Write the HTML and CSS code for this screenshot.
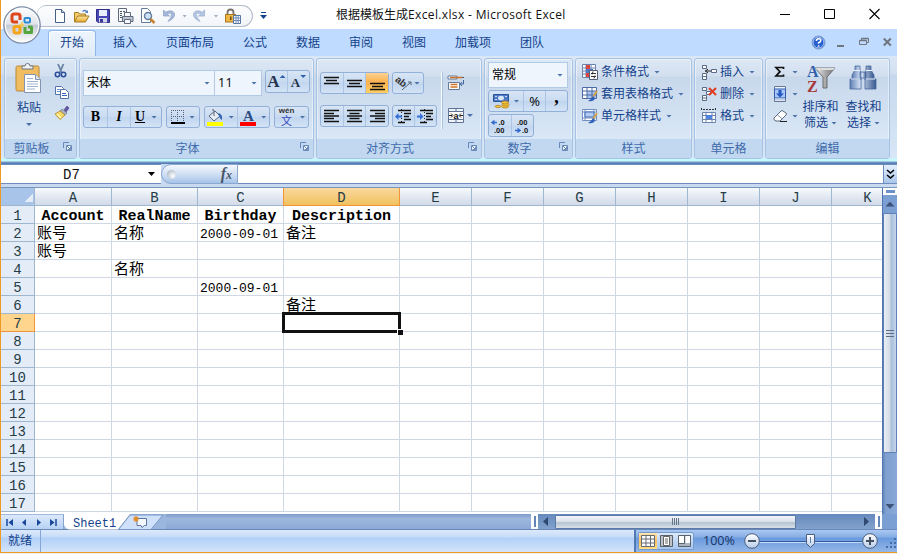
FILE: index.html
```html
<!DOCTYPE html>
<html lang="zh-CN">
<head>
<meta charset="utf-8">
<title>根据模板生成Excel.xlsx - Microsoft Excel</title>
<link rel="stylesheet" href="styles.css">
</head>
<body>
<svg class="defs" width="0" height="0">
  <defs>
    <linearGradient id="orb" x2="0" y2="1"><stop stop-color="#fff"/><stop offset=".48" stop-color="#dfe3e9"/><stop offset=".5" stop-color="#c3cad4"/><stop offset="1" stop-color="#fff"/></linearGradient>
    <linearGradient id="folder" x2="0" y2="1"><stop stop-color="#ffe9a0"/><stop offset="1" stop-color="#e7a62c"/></linearGradient>
    <linearGradient id="steel" x2="1"><stop stop-color="#5f7fb5"/><stop offset=".4" stop-color="#d5e2f5"/><stop offset="1" stop-color="#38598f"/></linearGradient>
    <linearGradient id="metal" x2="1"><stop stop-color="#f5f5f5"/><stop offset=".5" stop-color="#aaa"/><stop offset="1" stop-color="#777"/></linearGradient>
    <linearGradient id="knob" x2="0" y2="1"><stop stop-color="#fff"/><stop offset="1" stop-color="#b7cdec"/></linearGradient>
  </defs>
</svg>
<div class="window">
  <header class="titlebar">
    <svg class="orb" width="40" height="40" viewBox="0 0 40 40">
      <circle cx="20" cy="20" r="18.2" fill="url(#orb)" stroke="#7d8da6" stroke-width="1.3"/>
      <circle cx="20" cy="20" r="16.7" fill="none" stroke="#fff" stroke-width="1"/>
      <g fill="none" stroke-linejoin="round">
        <path d="M18 15v-4q0-2-2-2h-4q-2 0-2 2v4q0 2 2 2h4" stroke="#dc471b" stroke-width="3"/>
        <rect x="22.5" y="13" width="5.500" height="4.500" rx="1" stroke="#2b8bd0" stroke-width="2"/>
        <rect x="12" y="21.500" width="6" height="6.500" rx="1.500" stroke="#f4a51c" stroke-width="3"/>
        <path d="M23 22v5.500h6.500V22H26" stroke="#55a63c" stroke-width="3"/>
      </g>
      <path d="M17 20h5M20 17v5" stroke="#f9c84a" stroke-width="1.500"/>
    </svg>
    <div class="quick">
      <svg width="16" height="16"><path d="M3.500 1.500h6l3 3v10h-9z" fill="#fff" stroke="#456088"/><path d="M9.500 1.500v3h3" fill="#cbd9ee" stroke="#456088"/></svg>
      <svg width="17" height="16"><path d="M1.500 13.500v-9h4l1 1.500h6v2.500" fill="#f4cf69" stroke="#a77b24"/><path d="M1.500 14l3-6h11.500l-3.500 6z" fill="url(#folder)" stroke="#a77b24"/><path d="M9 3q3-2.500 5 0l1-1v3h-3l1-1q-1.500-1.500-3 0" fill="#5a82bd"/></svg>
      <svg width="16" height="16"><path d="M1.500 1.500h13v13H3l-1.500-1.500z" fill="#4647b5" stroke="#2c2d87"/><path d="M4 2h8v6H4z" fill="#e9f0fb"/><path d="M4 10h8v4.500H4z" fill="#d4d8e9"/><path d="M5 11h3v3.500H5z" fill="#383994"/></svg>
      <svg width="17" height="16" fill="#f7f9fc" stroke="#5e6b7e"><path d="M1.500.5h8v13h-8z"/><path d="M3 3.500h2m1 0h2M3 5.500h2M3 7.500h2M3 9.500h2" stroke="#456"/><path d="M7.500 4.500h6v4h-6z"/><path d="M5.500 8.500h10.500v5H5.500z" fill="#bdc4cd"/><path d="M7.500 11.500h6v4h-6z"/></svg>
      <svg width="17" height="16"><path d="M2.500.5h6l3 3v11h-9z" fill="#fff" stroke="#64799a"/><circle cx="9" cy="8" r="3.500" fill="#cfe3f8" stroke="#667f9e" stroke-width="1.500"/><path d="M11.500 11l4 4" stroke="#c9832d" stroke-width="2.500"/></svg>
      <svg width="16" height="16"><path d="M2.500 2v6h6L6.300 5.900Q10 4 10.500 6.500q0 3-3.500 7 7.500-3.500 6.500-8Q11.500 1 4.700 4.200z" fill="#a3b7d8" stroke="#8fa5ca" stroke-width=".8"/></svg>
      <i class="caret faint"></i>
      <svg width="16" height="16" class="redo"><path d="M12.500 2v6h-6l2.200-2.100Q5 4 4.500 6.500q0 3 3.500 7Q.5 10 1.500 5.500 3.500 1 10.300 4.200z" fill="#b4c6e0" stroke="#9db2d3" stroke-width=".8"/></svg>
      <i class="caret faint"></i>
      <svg width="17" height="16" class="lock"><path d="M3.500 7V4.500q0-3 3-3t3 3V7" fill="none" stroke="#76716a" stroke-width="1.800"/><rect x="1.500" y="6.500" width="10" height="7.500" fill="#edb645" stroke="#a97820"/><path d="M6 8.500h1.500V12H6z" fill="#6b4a13"/><path d="M9.500 7.500h7v8h-7z" fill="#fff" stroke="#54749f"/><path d="M9.500 10h7m-7 2.500h7M12 7.500v8m2.200-8v8" stroke="#6c8bb5"/></svg>
    </div>
    <div class="more"><i></i><i class="caret navy"></i></div>
    <div class="title">根据模板生成<span>Excel.xlsx - Microsoft Excel</span></div>
    <div class="winctl">
      <svg width="11" height="12"><path d="M1 6.500h10" stroke="#000"/></svg>
      <svg width="11" height="12"><path d="M.5 1.500h10v9H.5z" fill="none" stroke="#000"/></svg>
      <svg width="11" height="12"><path d="M.5 1l10 10m0-10l-10 10" stroke="#000" stroke-width="1.100"/></svg>
    </div>
  </header>

  <nav class="tabs">
    <span class="tab active">开始</span><span class="tab t2">插入</span><span class="tab t3">页面布局</span><span class="tab t4">公式</span><span class="tab t5">数据</span><span class="tab t6">审阅</span><span class="tab t7">视图</span><span class="tab t8">加载项</span><span class="tab t9">团队</span>
    <div class="docctl">
      <svg width="15" height="15"><circle cx="7.500" cy="7.500" r="6.500" fill="#2860cf" stroke="#7e9fc9"/><circle cx="7.500" cy="7.500" r="5.400" fill="none" stroke="#cfe2ff" stroke-width=".8"/><path d="M5.400 6q0-2.300 2.200-2.300T9.800 5.600q0 1.300-2.200 2.200v1m0 1.400v1.500" fill="none" stroke="#fff" stroke-width="1.500"/></svg>
      <svg width="8" height="12"><path d="M0 9h7" stroke="#6f7680" stroke-width="2"/></svg>
      <svg width="10" height="12"><path d="M2.500 4V1.500h7v4H8M.5 3.500h7v4h-7z" fill="none" stroke="#6f7680"/><path d="M.5 3.500h7M2.500 1.500h7" stroke="#6f7680" stroke-width="1.600"/></svg>
      <svg width="9" height="12"><path d="M.8 1.500l7 7m0-7l-7 7" stroke="#6f7680" stroke-width="2"/></svg>
    </div>
  </nav>

  <div class="ribbon">
    <section class="group clipboard">
      <div class="body">
        <div class="paste">
          <svg width="28" height="31"><rect x="1" y="3" width="23" height="25" rx="1.500" fill="#efbd60" stroke="#b98639"/><path d="M7 6V3h3q0-2.500 2.500-2.500T15 3h3v3z" fill="#f0f2f4" stroke="#6f7680"/><path d="M9.500 11.500h11l5 5v13h-16z" fill="#fff" stroke="#8593b1"/><path d="M20.500 11.500v5h5" fill="#dce5f2" stroke="#8593b1"/><path d="M12 15.500h6m-6 3h11m-11 2.500h11m-11 2.500h11m-11 2.500h8" stroke="#9fb3d0"/></svg>
          <span>粘贴</span><i class="caret"></i>
        </div>
        <div class="clips">
          <svg width="14" height="16"><path d="M4 1l4 9M9.500 1l-4 9" stroke="#6983a4" stroke-width="1.800"/><circle cx="3.500" cy="11.500" r="2.200" fill="none" stroke="#294f9d" stroke-width="1.600"/><circle cx="9.500" cy="11.500" r="2.200" fill="none" stroke="#294f9d" stroke-width="1.600"/></svg>
          <svg width="16" height="14" fill="#fff" stroke="#5272a8"><path d="M1.500 1.500h6l2 2v6h-8z"/><path d="M3 4.500h4m-4 2h5" stroke="#6e92d3"/><path d="M6.500 4.500h5l3 3v6h-8z"/><path d="M8 8.500h4m-4 2h5" stroke="#3a62c0"/></svg>
          <svg width="16" height="16"><path d="M10 5l3-4 2 2-3 4z" fill="#6859a8" stroke="#4b4486" stroke-width=".7"/><path d="M8 4l5 4-2 2-5-4z" fill="#aab4c4" stroke="#69748b" stroke-width=".7"/><path d="M6 6l5 4-5 4.500-5-5.500z" fill="#f7d965" stroke="#ae8423" stroke-width=".8"/><path d="M3 9l4 4" stroke="#fff5b4" stroke-width="1.500"/></svg>
        </div>
      </div>
      <footer>剪贴板<svg class="launch" width="9" height="9"><use href="#launch"/></svg></footer>
    </section>

    <section class="group font">
      <div class="body col">
        <div class="line">
          <div class="combo face"><span>宋体</span><i class="caret"></i></div><div class="combo size"><span>11</span><i class="caret"></i></div>
          <div class="btns grow"><span class="b"><b class="big">A</b><i class="caret up"></i></span><span class="b"><b class="small">A</b><i class="caret"></i></span></div>
        </div>
        <div class="line second">
          <div class="btns"><span class="b w24"><b>B</b></span><span class="b w24"><em>I</em></span><span class="b w30"><u>U</u><i class="caret"></i></span></div>
          <div class="btns w34"><span class="b"><svg width="14" height="14"><path d="M.5 0v13m6-13v13m6-13v13M0 .5h13m-13 6h13" stroke="#56627a" stroke-dasharray="1 1" fill="none"/><path d="M0 13h14" stroke="#000" stroke-width="2"/></svg><i class="caret"></i></span></div>
          <div class="btns w66"><span class="b"><svg width="17" height="17"><path d="M2 7l6-5 5 5-6 5z" fill="#e4ebf2" stroke="#56657d"/><path d="M7 7V2q0-2-2-1" fill="none" stroke="#56657d"/><path d="M11 4q5 1 4 7-2-1-3-4z" fill="#3465ae"/><path d="M0 13h16v4H0z" fill="#ff0"/></svg><i class="caret"></i></span><span class="b"><svg width="17" height="17"><text x="3" y="12" class="iconA">A</text><path d="M0 13h16v4H0z" fill="#f00"/></svg><i class="caret"></i></span></div>
          <div class="btns w35"><span class="b"><span class="wen"><small>wén</small><span>文</span></span><i class="caret"></i></span></div>
        </div>
      </div>
      <footer>字体<svg class="launch" width="9" height="9"><use href="#launch"/></svg></footer>
    </section>

    <section class="group align">
      <div class="body">
        <div class="stack">
          <div class="line">
            <div class="btns three"><span class="b"><svg width="15" height="12"><path d="M0 .5h15m-13 3h11M0 6.500h15" class="ink"/></svg></span><span class="b"><svg width="15" height="12"><path d="M0 3.500h15M2 6.500h11M0 9.500h15" class="ink"/></svg></span><span class="b on"><svg width="15" height="12"><path d="M0 6.500h15M2 9.500h11M0 12.500h15" class="ink"/></svg></span></div>
            <div class="btns w32"><span class="b"><svg width="16" height="16"><text x="-1" y="10" class="slant" transform="rotate(38 5 7)">ab</text><path d="M6 15l9-8m0 3V7h-3" stroke="#596476" fill="none"/></svg><i class="caret"></i></span></div>
          </div>
          <div class="line">
            <div class="btns three"><span class="b"><svg width="15" height="12"><path d="M0 .5h15M0 3.500h10M0 6h15M0 8.500h10M0 11.500h15" class="ink"/></svg></span><span class="b"><svg width="15" height="12"><path d="M0 .5h15m-12.500 3h10M0 6h15m-12.500 2.500h10M0 11.500h15" class="ink"/></svg></span><span class="b"><svg width="15" height="12"><path d="M0 .5h15M5 3.500h10M0 6h15M5 8.500h10M0 11.500h15" class="ink"/></svg></span></div>
            <div class="btns w45"><span class="b"><svg width="17" height="15"><path d="M3 1.500h13M9 4.500h7M9 7.500h5m-5 3h7M3 13.500h7" class="ink"/><path d="M6.500 0v15" stroke="#222" stroke-dasharray="1 2"/><path d="M7 6.500H3.500V4L0 7.500 3.500 11V8.500H7z" fill="#366fd7"/></svg></span><span class="b"><svg width="17" height="15"><path d="M3 1.500h13M9 4.500h7M9 7.500h5m-5 3h7M3 13.500h7" class="ink"/><path d="M7.500 0v15" stroke="#222" stroke-dasharray="1 2"/><path d="M0 6.500h3V4l3.500 3.500L3 11V8.500H0z" fill="#366fd7"/></svg></span></div>
          </div>
        </div>
        <div class="wrapcol">
          <svg width="17" height="16"><path d="M0 2.500h16" stroke="#4e5968"/><path d="M0 1h9v3H0zM.5 7.500h11v7H.5z" fill="#fff" stroke="#647a9b"/><path d="M2 2.500h12M2.500 9.500h7m-7 2.500h7" stroke="#d07325" stroke-width="1.500"/><path d="M15.500 5v4h-3m1.500-2l-2 2 2 2" fill="none" stroke="#41659d"/></svg>
          <div><svg width="16" height="15"><path d="M.5.500h15v14H.5zM.5 3.500h15m-15 8h15M8 .500v3m0 8v3" fill="#eef3fa" stroke="#5f7492"/><path d="M1 4h14v7H1z" fill="#fff"/><path d="M1 7.500h3m8 0h3M3 5.500l2 2-2 2m10-4l-2 2 2 2" stroke="#222" fill="none"/><text x="5.400" y="10.500" class="tiny">a</text></svg><i class="caret"></i></div>
        </div>
      </div>
      <footer>对齐方式<svg class="launch" width="9" height="9"><use href="#launch"/></svg></footer>
    </section>

    <section class="group number">
      <div class="body col">
        <div class="combo general"><span>常规</span><i class="caret"></i></div>
        <div class="btns numbtns"><span class="b w34"><svg width="17" height="16"><path d="M.5 1.500h15v7H.5z" fill="#4e78c3" stroke="#28549c"/><ellipse cx="8" cy="5" rx="3" ry="2.300" fill="#d8e6fb"/><path d="M2 3.500h2m8 0h2m-12 3h2" stroke="#c8daf5"/><g fill="#f7c63c" stroke="#a8741d" stroke-width=".7"><ellipse cx="12" cy="13.500" rx="3.500" ry="1.500"/><ellipse cx="12.500" cy="11.500" rx="3.500" ry="1.500"/><ellipse cx="12" cy="9.500" rx="3.500" ry="1.500"/><ellipse cx="5" cy="13.500" rx="3" ry="1.200"/></g></svg><i class="caret"></i></span><span class="b pct">%</span><span class="b comma">,</span></div>
        <div class="btns decbtns"><span class="b"><svg width="17" height="18"><text x="7.500" y="8" class="dec">.0</text><text x="3" y="16" class="dec">.00</text><path d="M6 5.500H1m2.500-2L1 5.500l2.500 2" stroke="#3169cd" stroke-width="1.500" fill="none"/></svg></span><span class="b"><svg width="17" height="18"><text x="3" y="8" class="dec">.00</text><text x="8" y="16" class="dec">.0</text><path d="M1 13.500h5m-2.500-2L6 13.500l-2.500 2" stroke="#3169cd" stroke-width="1.500" fill="none"/></svg></span></div>
      </div>
      <footer>数字<svg class="launch" width="9" height="9"><use href="#launch"/></svg></footer>
    </section>

    <section class="group styles">
      <div class="body col list">
        <div><svg width="16" height="16"><path d="M.5.500h13v13H.5zM.5 4h13m-13 3h13m-13 3h13M4 .500v13m5-13v13" fill="#fff" stroke="#6d83ae"/><path d="M4 1h4v4H4zM4 9h4v4H4z" fill="#db4540"/><path d="M4 5h7v4H4z" fill="#4e79c8"/><path d="M7.500 6.500h8v9h-8z" fill="#fff" stroke="#515e73"/><path d="M9 9.500h5m-5 3h5m-3-5l-1 3m3 1l-1 3" stroke="#333"/></svg>条件格式<i class="caret"></i></div>
        <div><svg width="16" height="16"><path d="M.5 1.500h14v11H.5z" fill="#fff" stroke="#4c6ba4"/><path d="M5 5h9v7H5z" fill="#a9c4ef"/><path d="M.5 5h14m-14 4h14M5 1.500v11m5-11v11" stroke="#4c6ba4"/><path d="M15 5l-4 6" stroke="#d2a54d" stroke-width="2"/><path d="M11 10l2 2q-1 4-7 3 3-1 5-5z" fill="#2e5fbd"/></svg>套用表格格式<i class="caret"></i></div>
        <div><svg width="16" height="16"><path d="M.5 1.500h14v11H.5zM.5 4h14m-14 6h14M3 1.500v11m9-11v11" fill="#fff" stroke="#7290c0"/><path d="M3 4h9v5H3z" fill="#b5ccf1" stroke="#416bb6"/><path d="M15 5l-4 6" stroke="#d2a54d" stroke-width="2"/><path d="M11 10l2 2q-1 4-7 3 3-1 5-5z" fill="#2e5fbd"/></svg>单元格样式<i class="caret"></i></div>
      </div>
      <footer>样式</footer>
    </section>

    <section class="group cells">
      <div class="body col list">
        <div><svg width="16" height="16"><path d="M1.500 1.500h4v3h-4zM1.500 9.500h4v3h-4zM1.500 12.500h4v3h-4zM10.500 5.500h5v3h-5z" fill="#fff" stroke="#586b88"/><path d="M4 7h6M7 5L4.500 7 7 9" fill="none" stroke="#222"/></svg>插入<i class="caret"></i></div>
        <div><svg width="16" height="16"><path d="M1.500 1.500h4v3h-4zM5.500 5.500h4v3h-4zM1.500 9.500h4v5h-4zM1.500 12h4" fill="#fff" stroke="#586b88"/><path d="M8 2l7 7m0-7L8 9" stroke="#e23b21" stroke-width="2"/></svg>删除<i class="caret"></i></div>
        <div><svg width="16" height="16"><path d="M1.500 4.500h13v10h-13zM1 7.500h14m-14 4h14M5 4.500v10m6-10v10" fill="#fff" stroke="#6b84ae"/><path d="M5 7h6v4H5z" fill="#4c84df"/><path d="M.5 0v3m14-3v3M2 1.500h11" stroke="#333" stroke-dasharray="2 1"/></svg>格式<i class="caret"></i></div>
      </div>
      <footer>单元格</footer>
    </section>

    <section class="group editing">
      <div class="body">
        <div class="list edits">
          <div><svg width="16" height="14" viewBox="1 0 16 14"><path d="M11.500 4V2.500H4l4 4.200-4 4.300h7.500V9.500" fill="none" stroke="#111" stroke-width="1.700"/></svg><i class="caret"></i></div>
          <div><svg width="14" height="16"><path d="M1.500.5h11v15h-11z" fill="#eef4fd" stroke="#67799b"/><path d="M1.500 3h11v9h-11z" fill="#a9c8f8" stroke="#315cab"/><path d="M5.500 4h3v3.500H11L7 11.500 3 7.500h2.500z" fill="#2458c0"/><path d="M2 13.500h10" stroke="#c4d3e8" stroke-width="2"/></svg><i class="caret"></i></div>
          <div><svg width="16" height="14"><path d="M1 9l7-7q1-1 2 0l3 2q1 1 0 2l-6 6H3q-3-1-2-3z" fill="#fff" stroke="#59677e"/><path d="M4.500 6l5 4" stroke="#8796ab"/><path d="M7 12.500h7" stroke="#222"/></svg><i class="caret"></i></div>
        </div>
        <div class="bigbtn sort"><svg width="30" height="31"><text x="1" y="14" class="sortA">A</text><text x="1" y="29" class="sortZ">Z</text><path d="M9 5h20l-8 9v11h-4V14z" fill="url(#metal)" stroke="#696d74"/><path d="M9 5h20l-2 2H11z" fill="#ddd"/></svg><span>排序和</span><span>筛选<i class="caret"></i></span></div>
        <div class="bigbtn"><svg width="30" height="31"><g fill="url(#steel)" stroke="#47679f" stroke-width=".8"><path d="M6 3h5v4l1 5v5H3v-5l3-5zM17 3h5v4l3 5v5H16v-5l1-5z"/><path d="M11 9h6v6h-6z"/><path d="M1 16h11v10H1zm15 0h11v10H16z"/></g><path d="M5 7.500h6m6 0h6M2 16h9m6 0h9" stroke="#eef4ff"/></svg><span>查找和</span><span>选择<i class="caret"></i></span></div>
      </div>
      <footer>编辑</footer>
    </section>
  </div>

  <div class="formulabar">
    <div class="namebox"><span>D7</span><i class="caret black"></i></div>
    <div class="fx"><i class="dot"></i><span>f<small>x</small></span></div>
    <div class="formula"></div>
    <div class="expand"><svg width="9" height="11"><path d="M1 1l3.500 3L8 1M1 6l3.500 3L8 6" fill="none" stroke="#000" stroke-width="1.600"/></svg></div>
  </div>

  <main class="sheet">
    <div class="gridwrap">
    <table>
      <colgroup><col class="c0"><col class="cA"><col class="cB"><col class="cB"><col class="cD"><col class="cN"><col class="cN"><col class="cN"><col class="cN"><col class="cN"><col class="cN"><col class="cN"></colgroup>
      <thead><tr><th class="corner"></th><th>A</th><th>B</th><th>C</th><th class="sel">D</th><th>E</th><th>F</th><th>G</th><th>H</th><th>I</th><th>J</th><th>K</th></tr></thead>
      <tbody>
        <tr class="head"><th>1</th><td>Account</td><td>RealName</td><td>Birthday</td><td>Description</td><td></td><td></td><td></td><td></td><td></td><td></td><td></td></tr>
        <tr><th>2</th><td>账号</td><td>名称</td><td>2000-09-01</td><td>备注</td><td></td><td></td><td></td><td></td><td></td><td></td><td></td></tr>
        <tr><th>3</th><td>账号</td><td></td><td></td><td></td><td></td><td></td><td></td><td></td><td></td><td></td><td></td></tr>
        <tr><th>4</th><td></td><td>名称</td><td></td><td></td><td></td><td></td><td></td><td></td><td></td><td></td><td></td></tr>
        <tr><th>5</th><td></td><td></td><td>2000-09-01</td><td></td><td></td><td></td><td></td><td></td><td></td><td></td><td></td></tr>
        <tr><th>6</th><td></td><td></td><td></td><td>备注</td><td></td><td></td><td></td><td></td><td></td><td></td><td></td></tr>
        <tr><th class="sel">7</th><td></td><td></td><td></td><td class="cursor"></td><td></td><td></td><td></td><td></td><td></td><td></td><td></td></tr>
        <tr><th>8</th><td></td><td></td><td></td><td></td><td></td><td></td><td></td><td></td><td></td><td></td><td></td></tr>
        <tr><th>9</th><td></td><td></td><td></td><td></td><td></td><td></td><td></td><td></td><td></td><td></td><td></td></tr>
        <tr><th>10</th><td></td><td></td><td></td><td></td><td></td><td></td><td></td><td></td><td></td><td></td><td></td></tr>
        <tr><th>11</th><td></td><td></td><td></td><td></td><td></td><td></td><td></td><td></td><td></td><td></td><td></td></tr>
        <tr><th>12</th><td></td><td></td><td></td><td></td><td></td><td></td><td></td><td></td><td></td><td></td><td></td></tr>
        <tr><th>13</th><td></td><td></td><td></td><td></td><td></td><td></td><td></td><td></td><td></td><td></td><td></td></tr>
        <tr><th>14</th><td></td><td></td><td></td><td></td><td></td><td></td><td></td><td></td><td></td><td></td><td></td></tr>
        <tr><th>15</th><td></td><td></td><td></td><td></td><td></td><td></td><td></td><td></td><td></td><td></td><td></td></tr>
        <tr><th>16</th><td></td><td></td><td></td><td></td><td></td><td></td><td></td><td></td><td></td><td></td><td></td></tr>
        <tr><th>17</th><td></td><td></td><td></td><td></td><td></td><td></td><td></td><td></td><td></td><td></td><td></td></tr>
      </tbody>
    </table>
    </div>
    <div class="vscroll">
      <div class="vsplit"></div>
      <div class="vup"><i class="arrow-up"></i></div>
      <div class="vthumb"><i></i><i></i><i></i></div>
      <div class="vdown"><i class="arrow-down"></i></div>
    </div>
  </main>

  <div class="sheettabs">
    <div class="navs">
      <svg width="8" height="9"><path d="M1 1v7" stroke="#19489b" stroke-width="1.500"/><path d="M7 1v7L2.500 4.500z" fill="#19489b"/></svg>
      <svg width="8" height="9"><path d="M6 1v7L2 4.500z" fill="#19489b"/></svg>
      <svg width="8" height="9"><path d="M2 1v7l4-3.500z" fill="#19489b"/></svg>
      <svg width="8" height="9"><path d="M1 1v7l4.500-3.500z" fill="#19489b"/><path d="M7 1v7" stroke="#19489b" stroke-width="1.500"/></svg>
    </div>
    <svg class="tabshape" width="102" height="16"><path d="M0 0h66L54 15.500H6Q2 15.500 0 11z" fill="#fff"/><path d="M66 1h33L87 15.500H54.500z" fill="#cfe1fa" stroke="#7795c5"/><text x="9" y="12.500" class="sheetname">Sheet1</text><path d="M73 4.500h9.500v7h-2L78 13.500l-1-2h-4z" fill="#f4f8ff" stroke="#60759b"/><path d="M72 2v6m-3-3h6M70 3l4 4m0-4l-4 4" stroke="#e38b21" stroke-width="1.100"/></svg>
    <div class="tabfill"></div>
    <div class="hsplit"></div>
    <div class="hscroll">
      <i class="arrow-left"></i>
      <div class="hthumb"><i></i><i></i><i></i><i></i></div>
      <i class="arrow-right"></i>
    </div>
    <div class="hsplit"></div>
    <div class="sizebox"></div>
  </div>

  <footer class="status">
    <div class="ready">就绪</div>
    <div class="fill"></div>
    <div class="right">
      <div class="views">
        <span class="v on"><svg width="14" height="12"><path d="M.5.500h13v11H.5zM.5 4h13m-13 4h13M5 .500v11m4.500-11v11" fill="#fff" stroke="#666b73"/></svg></span>
        <span class="v"><svg width="13" height="12"><path d="M.5.500h12v11H.5z" fill="#bec4ca" stroke="#59616c"/><path d="M3.500 1.500h6v9h-6zM5 4h3M5 6h3M5 8h3" fill="#fff" stroke="#666"/></svg></span>
        <span class="v"><svg width="13" height="12"><path d="M.5.500h12v11H.5z" fill="#aab4c0" stroke="#59616c"/><path d="M1 1h5v7H1zM7.500 1H12v7H7.500z" fill="#fff"/><path d="M1 8.500h5.500V1" stroke="#59616c" fill="none"/></svg></span>
      </div>
      <span class="pct100">100%</span>
      <svg class="zoom" width="136" height="20"><path d="M16 10.500h103" stroke="#315b9f"/><path d="M16 11.500h103" stroke="#c3dafa"/><path d="M67.500 8v6" stroke="#315b9f"/><g fill="url(#knob)" stroke="#4c5e7a"><circle cx="9" cy="10" r="7.300"/><circle cx="127" cy="10" r="7.300"/><path d="M63.500 3.500h8v9l-4 4-4-4z"/></g><path d="M5 10h8m110 0h8m-4-4v8" stroke="#444f60" stroke-width="2"/><path d="M67.500 6v6" stroke="#6480ad"/></svg>
      <svg class="grip" width="11" height="12"><path d="M9 1h2M5 5h2m2 0h2M1 9h2m2 0h2m2 0h2" stroke="#466da8" stroke-width="2"/></svg>
    </div>
  </footer>
</div>
<svg class="defs" width="0" height="0"><defs><g id="launch"><path d="M.5 6V.5H6" fill="none" stroke="#6689b8"/><path d="M3.500 3.500h5v5h-5z" fill="#f4f9ff" stroke="#6689b8"/><path d="M4 4l3 3M7.500 4.500v3h-3" stroke="#6689b8" fill="none"/></g></defs></svg>
</body>
</html>
```
FILE: styles.css
```css
*, *::before, *::after { box-sizing: border-box; }
body {
  margin: 0;
  width: 897px;
  height: 554px;
  overflow: hidden;
  background: #f4f1ea;
  font: 12px/16px "Open Sans", "Noto Sans CJK SC", sans-serif;
  color: #15428b;
}
svg { display: block; flex: none; overflow: visible; }
.defs { position: absolute; }
.window {
  display: flex;
  flex-direction: column;
  height: 553px;
  border-left: 1px solid #ee9a25;
  border-bottom: 1px solid #ee9a25;
  position: relative;
}

/* carets */
.caret {
  flex: none;
  display: inline-block;
  width: 6px;
  height: 3px;
  background: #4a72a8;
  clip-path: polygon(0 0, 100% 0, 50% 100%);
}
.caret.up { clip-path: polygon(50% 0, 100% 100%, 0 100%); }
.caret.faint { background: #a3b1c6; width: 5px; }
.caret.navy { background: #15428b; width: 7px; height: 4px; }
.caret.black { background: #000; width: 7px; height: 4px; }

/* title bar */
.titlebar { height: 29px; flex: none; display: flex; background: #fff; }
.orb { position: absolute; left: 1px; top: 5px; z-index: 3; }
.quick {
  width: 216px;
  height: 22px;
  margin: 5px 0 0 36px;
  padding-left: 15px;
  display: flex;
  align-items: center;
  gap: 5.200px;
  border: 1px solid #b4bccb;
  border-left: 0;
  border-radius: 10px 12px 12px 0;
  background: linear-gradient(#fdfdfe, #f1f4f9);
}
.more { margin: 12px 0 0 7px; width: 7px; height: 8px; display: flex; flex-direction: column; gap: 2px; }
.more i:first-child { height: 1px; width: 5px; margin-left: 1px; background: #15428b; }
.title { width: 240px; margin-left: 69px; line-height: 29px; color: #111; white-space: nowrap; }
.title span { letter-spacing: .36px; }
.winctl { margin: 8px 17px 0 auto; display: flex; gap: 34px; }

/* ribbon tabs */
.tabs { height: 27px; flex: none; display: flex; background: #bfdbff; line-height: 27px; white-space: nowrap; }
.tab { flex: none; width: 24px; margin-right: 29px; }
.tab.active {
  width: 48px;
  height: 26px;
  margin: 1px 17px 0 47px;
  line-height: 24px;
  text-align: center;
  border: 1px solid #8fb7e8;
  border-bottom: 0;
  border-radius: 4px 4px 0 0;
  background: linear-gradient(#eef5fd, #dfeaf7);
  box-shadow: inset 1px 1px #fff;
}
.tab.t3 { width: 48px; }
.tab.t8 { width: 36px; }
.docctl { margin: 0 5px 0 auto; display: flex; align-items: center; gap: 14px; }
.docctl svg:first-child { margin-right: -3px; }

/* ribbon */
.ribbon {
  height: 108px;
  flex: none;
  display: flex;
  gap: 2px;
  padding: 2px 0 6px 3px;
  background: linear-gradient(#dbe7f5 0, #d1dff0 18px, #c7d8ed 19px, #d8e7f7 102px, #c5fafd 103px, #c5fafd 105px, #7d9dc8 106px, #4a75b1 108px);
}
.group {
  flex: none;
  display: flex;
  flex-direction: column;
  height: 101px;
  border: 1px solid #a6c3e4;
  border-radius: 3px;
  background: linear-gradient(#dde8f5 0, #d2dfef 17px, #c8d8eb 18px, #d9e7f6 80px);
  box-shadow: inset 0 0 0 1px rgba(255,255,255,.45);
  white-space: nowrap;
}
.group .body { display: flex; height: 80px; flex: none; }
.group .body.col { flex-direction: column; }
.group footer {
  height: 19px;
  line-height: 19px;
  text-align: center;
  color: #3e6aaa;
  background: #c1d8f0;
  position: relative;
}
.launch { position: absolute; right: 4px; top: 3px; }
.clipboard { width: 73px; }
.clipboard footer { padding-right: 18px; }
.font { width: 235px; }
.font footer { padding-right: 18px; }
.align { width: 166px; }
.align footer { padding-right: 18px; }
.number { width: 89px; }
.number footer { padding-right: 18px; }
.styles { width: 117px; }
.cells { width: 69px; }
.editing { width: 125px; }

.paste { width: 48px; padding-top: 4px; display: flex; flex-direction: column; align-items: center; }
.paste span { margin: 6px 0 6px; }
.paste i { margin-top: 1px; }
.clips { display: flex; flex-direction: column; gap: 6px; padding-top: 4px; margin-left: 1px; }

.line { display: flex; }
.combo {
  display: flex;
  align-items: center;
  justify-content: space-between;
  height: 26px;
  padding: 0 4px 0 3px;
  border: 1px solid #b3cae7;
  background: #eef5fd;
  color: #000;
}
.btns {
  display: flex;
  height: 22px;
  border: 1px solid #92b0d8;
  border-radius: 3px;
  background: linear-gradient(#d7e5f5, #c9dbf0 50%, #c0d5ef 51%, #d3e3f5);
  flex: none;
}
.b { flex: 1 1 0; display: flex; align-items: center; justify-content: center; gap: 4px; color: #000; }
.b + .b { border-left: 1px solid #adc5e4; }
.b b, .b em, .b u { font-family: "Liberation Serif", serif; font-weight: bold; font-size: 14px; }
.b u { padding-right: 2px; }
.font .body { padding: 11px 0 0 3px; }
.face { width: 132px; }
.size { width: 47px; border-left: 0; font-size: 12.500px; letter-spacing: .3px; }
.grow { width: 45px; height: 23px; margin-left: 3px; }
.grow .b { gap: 0; align-items: center; }
.grow .caret { align-self: flex-start; margin-top: 4px; background: #3162aa; }
.b .big { font-size: 17px; color: #26354d; }
.b .small { font-size: 13px; color: #26354d; padding-top: 3px; }
.second { margin-top: 10px; gap: 4px; }
.w24 { flex: 0 0 23px; }
.w30 { flex: 0 0 31px; }
.w32 { width: 32px; }
.w32 .b { gap: 2px; }
.btns.w34 { width: 34px; }
.btns.w66 { width: 66px; }
.btns.w35 { width: 35px; }
.btns.w45 { width: 45px; }
.iconA { font: bold 15px "Liberation Serif", serif; fill: #2d4d83; }
.wen { display: flex; flex-direction: column; align-items: center; width: 18px; }
.wen small { font: bold 8px/8px "Liberation Sans", sans-serif; color: #333; }
.wen span { font-size: 11px; line-height: 12px; color: #3448bd; }
.ink { stroke: #111; stroke-width: 1.500px; fill: none; }
.slant { font: bold 10px "Liberation Sans", sans-serif; fill: #333; }
.tiny { font: bold 9px "Liberation Sans", sans-serif; fill: #111; }

.align .body { padding: 13px 0 0 3px; }
.align .line { gap: 3px; }
.align .line + .line { margin-top: 11px; }
.three { width: 69px; }
.b.on { background: linear-gradient(#fbd391, #fdb150 45%, #ffcf61); }
.stack { height: 57px; width: 122px; border-right: 1px solid #f7fbff; box-shadow: 1px 0 #a9c2e0; }
.wrapcol { padding: 3px 0 0 6px; display: flex; flex-direction: column; gap: 17px; }
.wrapcol div { display: flex; gap: 3px; align-items: center; }

.number .body { padding: 3px 0 0 3px; }
.general { width: 80px; }
.numbtns { width: 80px; margin-top: 2px; }
.numbtns .w34 { flex: 0 0 34px; }
.pct { font-size: 13px; }
.comma { font: bold 18px/10px "Liberation Serif", serif; padding-bottom: 9px; }
.decbtns { width: 46px; margin-top: 2px; height: 23px; }
.dec { font: bold 7.500px "Liberation Sans", sans-serif; fill: #111; }

.list > div { display: flex; align-items: center; height: 22px; gap: 3px; }
.styles .list, .cells .list { padding: 2px 0 0 6px; }
.cells .list { padding-left: 6px; }
.list .caret { margin-left: 2px; }
.edits { width: 36px; padding: 2px 0 0 7px; }
.edits > div { gap: 1px; }
.edits svg { width: 16px; }
.bigbtn { width: 43px; display: flex; flex-direction: column; align-items: center; padding-top: 4px; }
.bigbtn span { line-height: 16px; display: flex; align-items: center; gap: 3px; }
.bigbtn svg { margin-bottom: 5px; }
.sort { margin-left: -3px; }
.sortA { font: bold 16px "Liberation Serif", serif; fill: #315eaa; }
.sortZ { font: bold 16px "Liberation Serif", serif; fill: #a6393e; }

/* formula bar */
.formulabar { height: 24px; flex: none; display: flex; padding-bottom: 3px; background: #c9daf0; border-bottom: 1px solid #7795bd; }
.formulabar > div { height: 20px; border-bottom: 1px solid #6c8dbd; background: #fff; border-top: 1px solid #6c8dbd; }
.namebox { width: 160px; display: flex; align-items: center; color: #111; font: 14px/20px "Liberation Mono", monospace; }
.namebox span { width: 147px; text-align: center; padding: 1px 6px 0 0; }
.formulabar .fx {
  width: 77px;
  padding: 0 5px 0 5px;
  display: flex;
  justify-content: space-between;
  align-items: center;
  border: 1px solid #89a8d2;
  border-radius: 10px 0 0 10px;
  background: linear-gradient(#f5f8fd, #c5d8f1 65%, #a6c3e8);
}
.dot { width: 9px; height: 9px; border-radius: 5px; background: radial-gradient(circle at 65% 65%, #fff, #9daabd); }
.fx span { font: italic bold 16px/16px "Liberation Serif", serif; color: #4b5869; }
.fx small { font-size: 12px; }
.formula { flex: 1; }
.formulabar .expand { width: 14px; display: flex; align-items: center; justify-content: center; background: linear-gradient(#e4effd, #a9c5eb); border-left: 1px solid #6c8dbd; }

/* worksheet */
.sheet { height: 326px; flex: none; display: flex; }
.gridwrap { width: 881px; height: 326px; overflow: hidden; background: #fff; flex: none; }
table { width: 903px; table-layout: fixed; border-collapse: separate; border-spacing: 0; }
.c0 { width: 34px; } .cA { width: 77px; } .cB { width: 86px; } .cD { width: 116px; } .cN { width: 72px; }
th, td {
  height: 18px;
  padding: 4px 0 0 2px;
  border: 0 solid #d0d7e5;
  border-width: 0 1px 1px 0;
  font: 13px/13px "Liberation Mono", "Noto Sans CJK SC", monospace;
  color: #000;
  white-space: nowrap;
}
tbody tr:not(.head) td:not(:nth-child(4)) { font-size: 15px; }
th { text-align: center; font-size: 14px; color: #253c47; background: #e4ecf7; border-color: #9eb6ce; padding-left: 0; }
thead th { background: linear-gradient(#f7fafd, #dfe6f0 60%, #d3dbe9); }
th.corner { background: linear-gradient(135deg, transparent 50%, #e4ecf8 50%) 23px 5px / 9px 9px no-repeat, #a9c4e9; }
thead th.sel { background: linear-gradient(#f9d99f, #f1c15f); border-color: #f29536; box-shadow: -1px 0 #f29536; }
tbody th.sel { background: #ffd58d; border-color: #f29536; }
.head td { text-align: center; font-weight: bold; font-size: 15px; padding-left: 0; }
td.cursor { position: relative; }
.cursor::before { content: ""; position: absolute; left: -2px; top: -2px; width: 119px; height: 21px; border: 3px solid #111; }
.cursor::after { content: ""; position: absolute; right: -4px; bottom: -4px; width: 6px; height: 6px; background: #111; border: solid #fff; border-width: 1px 0 0 1px; }

/* vertical scroll */
.vscroll { width: 15px; display: flex; flex-direction: column; background: linear-gradient(90deg, #6687b8, #7fa0d0 3px, #8aa9d6); border-left: 1px solid #4d76b2; }
.vsplit { height: 7px; border: 2px solid #fff; background: #6c91c8; border-left-width: 3px; }
.vup { height: 18px; display: flex; align-items: center; justify-content: center; background: #7c9fd3; }
.arrow-up, .arrow-down { width: 9px; height: 5px; background: #3e5379; clip-path: polygon(50% 0, 100% 100%, 0 100%); }
.arrow-down { clip-path: polygon(0 0, 100% 0, 50% 100%); }
.vthumb { height: 240px; border: 1px solid #5f81b5; border-radius: 1px; display: flex; flex-direction: column; align-items: center; justify-content: center; gap: 2px; background: linear-gradient(90deg, #e9edf3, #d5dde8 45%, #a9bfdc 60%, #c5d5ea); }
.vthumb i { width: 8px; height: 1px; background: #5c6c82; }
.vdown { flex: 1; display: flex; justify-content: center; align-items: flex-end; padding-bottom: 5px; }

/* sheet tabs */
.sheettabs { height: 16px; flex: none; display: flex; background: #9bb6dd; border-bottom: 1px solid #6788b9; }
.navs { width: 63px; display: flex; align-items: center; justify-content: space-between; padding: 0 6px 0 5px; background: linear-gradient(#dce9fb, #b6d1f4); border-right: 1px solid #86a4cf; border-top: 1px solid #9fb9de; }
.sheetname { font: 12px "Liberation Mono", monospace; fill: #15428b; }
.tabfill { flex: 1; background: linear-gradient(#7e9dcb, #9db8de 5px, #8ba9d4); }
.hsplit { width: 7px; border: solid #fff; border-width: 2px 2px 2px 3px; background: #6387bb; flex: none; }
.hscroll { width: 337px; flex: none; display: flex; align-items: center; background: linear-gradient(#6489bd, #83a3cd); padding: 0 6px 0 5px; }
.arrow-left, .arrow-right { width: 5px; height: 9px; background: #2e486f; clip-path: polygon(100% 0, 100% 100%, 0 50%); }
.arrow-right { clip-path: polygon(0 0, 100% 50%, 0 100%); margin-left: auto; }
.hthumb { width: 241px; height: 14px; margin-left: 7px; border: 1px solid #5c79a8; border-radius: 1px; display: flex; align-items: center; justify-content: center; gap: 1px; background: linear-gradient(#f3f6fa, #dce2e9 45%, #b5c3d2 55%, #d8e0e9); }
.hthumb i { width: 1px; height: 7px; background: #65758b; }
.sizebox { width: 15px; background: #7c9fd3; }

/* status bar */
.status { height: 22px; flex: none; display: flex; background: linear-gradient(#dce9fa, #c6dcf9 7px, #b0d0f8 8px, #d4e5fa); }
.ready { width: 40px; padding: 3px 0 0 7px; border-right: 1px solid #86a7d3; }
.fill { flex: 1; }
.right { width: 263px; display: flex; align-items: center; border-left: 2px solid #5279b2; background: linear-gradient(#a9c8f3, #87aee3 7px, #699ade 8px, #94b7e6); }
.views { width: 56px; height: 18px; display: flex; margin-left: 2px; border: 1px solid #789bce; background: linear-gradient(#dae8fb, #a8c7f0); border-radius: 2px; }
.v { flex: 1; display: flex; align-items: center; justify-content: center; }
.v.on { background: linear-gradient(#ffe6b0, #f9bf62 50%, #ffdc84); }
.pct100 { width: 40px; margin-left: 9px; font-size: 12.500px; white-space: nowrap; color: #183668; }
.grip { margin-left: 6px; margin-top: 6px; }
```
